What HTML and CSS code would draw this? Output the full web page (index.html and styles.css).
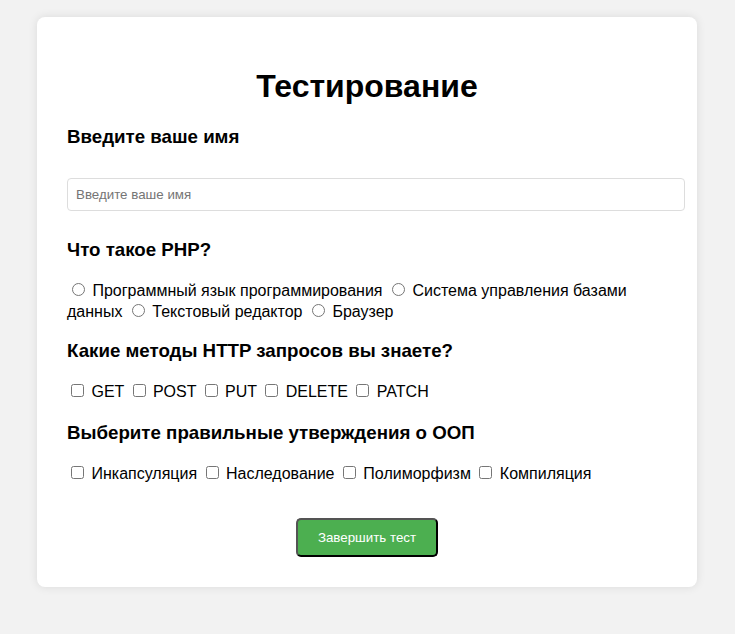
FILE: index.html
```html
<!DOCTYPE html>
<html lang="ru">
<head>
<meta charset="utf-8">
<title>Тестирование</title>
<link rel="stylesheet" href="styles.css">
</head>
<body>
<div class="card">
  <h1 class="title">Тестирование</h1>
  <form class="quiz">
    <div class="block block-first">
      <h3 class="q">Введите ваше имя</h3>
      <input class="name" type="text" placeholder="Введите ваше имя">
    </div>
    <div class="block">
      <h3 class="q">Что такое PHP?</h3>
      <div class="opts">
        <label><input type="radio" name="php"> Программный язык программирования</label>
        <label><input type="radio" name="php"> Система управления базами данных</label>
        <label><input type="radio" name="php"> Текстовый редактор</label>
        <label><input type="radio" name="php"> Браузер</label>
      </div>
    </div>
    <div class="block">
      <h3 class="q">Какие методы HTTP запросов вы знаете?</h3>
      <div class="opts">
        <label><input type="checkbox"> GET</label>
        <label><input type="checkbox"> POST</label>
        <label><input type="checkbox"> PUT</label>
        <label><input type="checkbox"> DELETE</label>
        <label><input type="checkbox"> PATCH</label>
      </div>
    </div>
    <div class="block block-oop">
      <h3 class="q">Выберите правильные утверждения о ООП</h3>
      <div class="opts">
        <label><input type="checkbox"> Инкапсуляция</label>
        <label><input type="checkbox"> Наследование</label>
        <label><input type="checkbox"> Полиморфизм</label>
        <label><input type="checkbox"> Компиляция</label>
      </div>
    </div>
    <div class="actions">
      <button class="submit" type="button">Завершить тест</button>
    </div>
  </form>
</div>
</body>
</html>
```

FILE: styles.css
```css
html, body {
  margin: 0;
  padding: 0;
}
body {
  background: #f2f2f2;
  font-family: "Liberation Sans", Arial, sans-serif;
  color: #000;
  padding-top: 17px;
  padding-bottom: 40px;
  padding-right: 1px;
}
.card {
  width: 600px;
  margin: 0 auto;
  background: #fff;
  padding: 30px;
  border-radius: 8px;
  box-shadow: 0 0 10px rgba(0, 0, 0, 0.1);
}
.title {
  font-size: 32px;
  text-align: center;
  margin: 21px 0 21px;
}
.q {
  font-size: 18.72px;
  margin: 18.72px 0;
}
.block-first .q {
  margin-top: 0;
}
.block-oop .q {
  margin-top: 20px;
}
.name {
  width: 100%;
  padding: 8px;
  border: 1px solid #ddd;
  border-radius: 4px;
  font-family: "Liberation Sans", Arial, sans-serif;
  font-size: 13.33px;
  margin: 30px 0 28px;
  display: block;
}
.name::placeholder {
  color: #757575;
}
.opts {
  font-size: 16px;
  line-height: 20px;
}
.actions {
  text-align: center;
  margin-top: 34px;
}
.submit {
  background: #4caf50;
  color: #fff;
  padding: 10px 20px;
  border-radius: 5px;
  font-family: "Liberation Sans", Arial, sans-serif;
  font-size: 13.33px;
  cursor: pointer;
}
```
